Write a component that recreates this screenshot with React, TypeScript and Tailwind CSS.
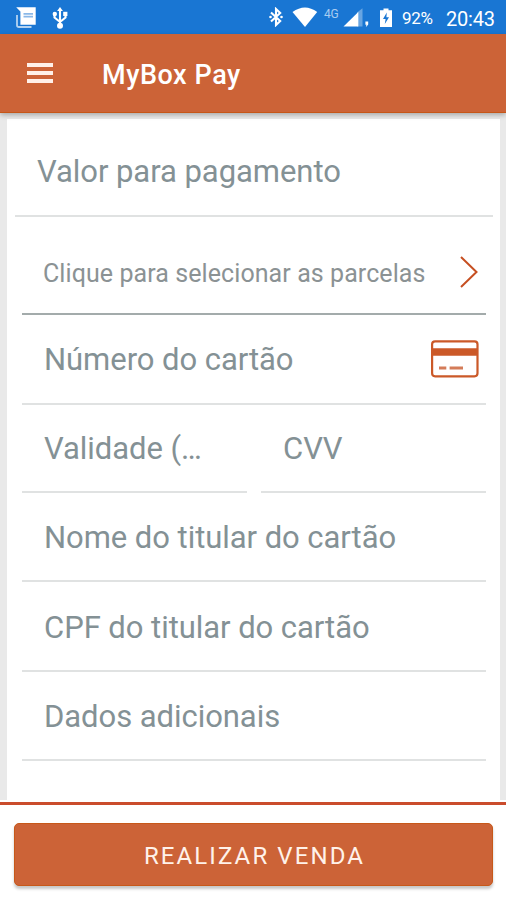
import React from "react";

function StatusBar() {
  return (
    <div className="flex h-[34px] shrink-0 items-center bg-[#1976d3] text-white">
      <svg className="ml-[15px] h-[22px] w-[22px]" viewBox="0 0 22 22" fill="none">
        <path d="M1.2 1.2H20.7V18.7H5.4V5.6Z" fill="#fff" />
        <path d="M2 9V19.2Q2 21 4 21H16.5" stroke="#b4d3f1" strokeWidth="1.8" />
        <path d="M8.5 7.8H18M8.5 10.7H18" stroke="#8ab8e8" strokeWidth="1.8" />
      </svg>
      <svg className="ml-[15px] h-[24px] w-[16px]" viewBox="0 0 16 24" fill="none" stroke="#fff">
        <path d="M8 5V21M2.5 9.5V12.5L8 17L13.5 12.5V9.5" strokeWidth="2.1" />
        <path d="M8 2L10.9 6H5.1Z" fill="#fff" stroke="none" />
        <circle cx="8" cy="20.8" r="3" fill="#fff" stroke="none" />
        <circle cx="2.8" cy="9" r="2.2" fill="#fff" stroke="none" />
        <path d="M11.2 6.8H15.4V11H11.2Z" fill="#fff" stroke="none" />
      </svg>
      <div className="flex-1" />
      <svg className="h-[20px] w-[14px]" viewBox="0 0 14 20" fill="none" stroke="#fff">
        <path d="M2 5.5L11.2 14L7 18V2L11.2 6L2 14.5" strokeWidth="2.1" />
        <circle cx="1.5" cy="10" r="1.3" fill="#fff" stroke="none" />
        <circle cx="12.5" cy="10" r="1.3" fill="#fff" stroke="none" />
      </svg>
      <svg className="ml-[9px] h-[20px] w-[26px]" viewBox="0 0 26 20">
        <path d="M0.5 5Q13 -4.2 25.2 5L13 20Z" fill="#fff" />
      </svg>
      <span className="ml-[6px] w-[16px] -translate-y-[3px] text-[12px] leading-none tracking-[-0.2px] text-[#a8ccf1]">4G</span>
      <svg className="ml-[3px] h-[20px] w-[26px]" viewBox="0 0 26 20">
        <path d="M14 5.5L19.5 1.2V19.5H14Z" fill="#68a5e2" />
        <path d="M0.5 19.5L15.3 5V19.5Z" fill="#fff" />
        <path d="M22.4 14.5H25.2V17.6L23.6 19.5H22.8L23.6 17.8H22.4Z" fill="#fff" />
      </svg>
      <svg className="ml-[10px] mt-[2px] h-[20px] w-[14px]" viewBox="0 0 14 20">
        <path d="M4.5 0.6H9.5V2.2H13V19H1V2.2H4.5Z" fill="#fff" />
        <path d="M7.8 4.5L4 11H6.6L5.8 16L10 9.3H7.4Z" fill="#1976d3" />
      </svg>
      <span className="ml-[9px] mt-[3px] w-[33px] whitespace-nowrap text-[17px] leading-none tracking-[-0.3px]">92%</span>
      <span className="ml-[11px] mr-[10px] mt-[3px] w-[50px] whitespace-nowrap text-[20px] leading-none tracking-[-0.2px]">20:43</span>
    </div>
  );
}

function Field({ label, children, className }: { label: string; children?: React.ReactNode; className: string }) {
  return (
    <div className={`flex items-center justify-between border-b-2 border-[#e0e2e2] pl-[22px] text-[31px] leading-none tracking-[-0.05px] text-[#849195] ${className}`}>
      <span className="whitespace-nowrap">{label}</span>
      {children}
    </div>
  );
}

export default function App() {
  return (
    <div className="flex h-[900px] w-[506px] flex-col overflow-hidden bg-[#e9e9e9] font-['Roboto',sans-serif]">
      <StatusBar />
      <header className="relative flex h-[79px] shrink-0 items-center border-b border-[#c65618] bg-[#cc6337] pl-[27px] text-white shadow-[0_2px_5px_rgba(0,0,0,0.28)]">
        <div className="flex w-[26px] flex-col gap-[4px]">
          <i className="h-[4px] bg-[#fff0e8]" />
          <i className="h-[4px] bg-[#fff0e8]" />
          <i className="h-[4px] bg-[#fff0e8]" />
        </div>
        <h1 className="ml-[49px] mt-[5px] whitespace-nowrap text-[27px] font-medium leading-none tracking-[0.55px]">MyBox Pay</h1>
      </header>
      <main className="ml-[7px] mr-[6px] mt-[6px] flex flex-1 flex-col bg-white pl-[8px] pr-[7px]">
        <Field label="Valor para pagamento" className="h-[98px] pt-[8px]" />
        <div className="ml-[7px] mr-[7px] flex flex-col">
          <button className="flex h-[98px] items-center justify-between border-b-2 border-[#a3abab] pl-[21px] pr-[7px] pt-[14px] text-[25px] leading-none tracking-[0.08px] text-[#8b9294]">
            <span className="whitespace-nowrap pt-[3px]">Clique para selecionar as parcelas</span>
            <svg className="h-[34px] w-[20px]" viewBox="0 0 20 34" fill="none">
              <path d="M2 2L17.5 17L2 32" stroke="#c64f21" strokeWidth="2" />
            </svg>
          </button>
          <Field label="Número do cartão" className="h-[90px] pr-[7px]">
            <svg className="h-[38px] w-[48px]" viewBox="0 0 48 38" fill="none" stroke="#cb5928">
              <rect x="1.1" y="1.3" width="45.4" height="35" rx="3" strokeWidth="2.2" />
              <path d="M1 12H46.5" strokeWidth="7.6" />
              <path d="M8 28H15.3M18.6 28H32" stroke="#d47c59" strokeWidth="2.8" />
            </svg>
          </Field>
          <div className="flex justify-between">
            <Field label="Validade (…" className="h-[88px] w-[225px]" />
            <Field label="CVV" className="h-[88px] w-[225px]" />
          </div>
          <Field label="Nome do titular do cartão" className="h-[89px] pt-[2px]" />
          <Field label="CPF do titular do cartão" className="h-[90px] pt-[2px]" />
          <Field label="Dados adicionais" className="h-[89px] pt-[2px]" />
        </div>
      </main>
      <footer className="h-[100px] shrink-0 bg-white pt-[2px]">
        <div className="border-t-[3px] border-[#ca4c2c] pl-[14px] pr-[13px] pt-[18px]">
          <button className="flex h-[63px] w-full items-center justify-center rounded-[5px] border border-[#c75819] bg-[#cc6337] pl-[2px] text-[24px] leading-none tracking-[2.1px] text-[#fff2ea] shadow-[0_3px_3px_rgba(0,0,0,0.22)]">
            <span className="whitespace-nowrap pt-[2px]">REALIZAR VENDA</span>
          </button>
        </div>
      </footer>
    </div>
  );
}
